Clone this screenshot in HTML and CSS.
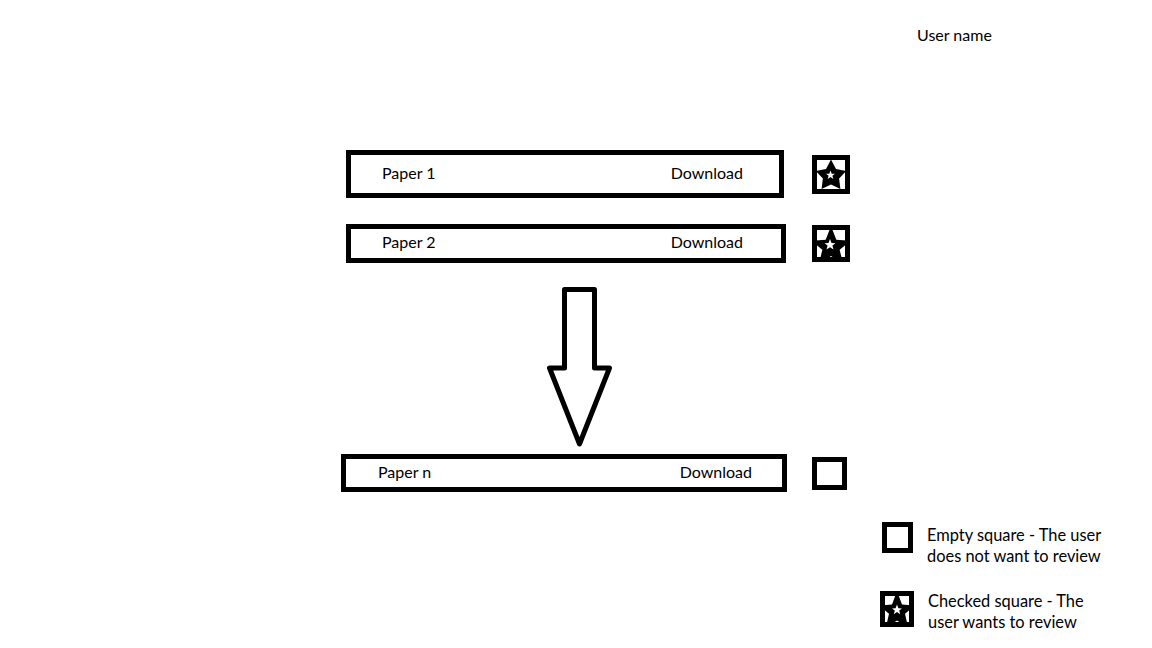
FILE: index.html
```html
<!DOCTYPE html>
<html lang="en">
<head>
    <meta charset="UTF-8">
    <meta name="viewport" content="width=device-width, initial-scale=1.0">
    <title>Papers - Review</title>
    <link rel="stylesheet" href="styles.css">
</head>
<body>
    <header class="topbar">
        <span class="user-name">User name</span>
    </header>

    <main class="papers">
        <div class="paper-row row-1">
            <div class="paper">
                <span class="paper-title">Paper 1</span>
                <a class="download" href="#">Download</a>
            </div>
            <!-- checked: user wants to review -->
            <svg class="mark mark-1" viewBox="0 0 38 39">
                <rect x="0" y="0" width="38" height="39" fill="#fff"/>
                <polygon fill="#000" points="19,4.5 24,14.1 34.2,16.1 27.1,23.6 28.4,33.9 19,29.5 9.6,33.9 10.9,23.6 3.8,16.1 14,14.1"/>
                <polygon fill="#fff" points="18.5,15.5 19.7,18.7 23,18.8 20.4,20.8 21.3,24 18.5,22.1 15.7,24 16.6,20.8 14,18.8 17.3,18.7"/>
                <rect x="2.5" y="2.5" width="33" height="34" fill="none" stroke="#000" stroke-width="5"/>
            </svg>
        </div>

        <div class="paper-row row-2">
            <div class="paper">
                <span class="paper-title">Paper 2</span>
                <a class="download" href="#">Download</a>
            </div>
            <svg class="mark mark-2" viewBox="0 0 38 37">
                <rect x="0" y="0" width="38" height="37" fill="#fff"/>
                <polygon fill="#000" points="19,1 24.3,14.7 39,15.8 27.6,24.8 31.2,39 19,31 6.8,39 10.4,24.8 -1,15.8 13.7,14.7"/>
                <polygon fill="#fff" points="18,14 19.5,18 23.5,18.2 20.4,20.6 21.5,24.5 18,22.2 14.5,24.5 15.6,20.6 12.5,18.2 16.5,18"/>
                <rect x="2.5" y="2.5" width="33" height="32" fill="none" stroke="#000" stroke-width="5"/>
            </svg>
        </div>

        <svg class="arrow" viewBox="0 0 65 160">
            <polygon points="17.5,2.5 47.5,2.5 47.5,81 62.5,81 32.5,157 2.5,81 17.5,81" fill="#fff" stroke="#000" stroke-width="5" stroke-linejoin="round"/>
        </svg>

        <div class="paper-row row-n">
            <div class="paper">
                <span class="paper-title">Paper n</span>
                <a class="download" href="#">Download</a>
            </div>
            <!-- empty: user does not want to review -->
            <span class="mark mark-empty"></span>
        </div>
    </main>

    <aside class="legend">
        <div class="legend-item item-empty">
            <span class="legend-box"></span>
            <p>Empty square - The user<br>does not want to review</p>
        </div>
        <div class="legend-item item-checked">
            <svg class="legend-star" viewBox="0 0 34 36">
                <rect x="0" y="0" width="34" height="36" fill="#fff"/>
                <polygon fill="#000" points="17,0 22,13.5 35,14.5 25,22.8 28.2,37 17,29.5 5.8,37 9,22.8 -1,14.5 12,13.5"/>
                <polygon fill="#fff" points="17,13.5 18.4,17.2 22,17.4 19.2,19.6 20.2,23.2 17,21.1 13.8,23.2 14.8,19.6 12,17.4 15.6,17.2"/>
                <rect x="2.5" y="2.5" width="29" height="31" fill="none" stroke="#000" stroke-width="5"/>
            </svg>
            <p>Checked square - The<br>user wants to review</p>
        </div>
    </aside>
</body>
</html>
```

FILE: styles.css
```css
* {
    margin: 0;
    padding: 0;
    box-sizing: border-box;
}

body {
    font-family: Lato, "Open Sans", sans-serif;
    font-size: 16px;
    color: #000;
    background: #fff;
    width: 1152px;
    min-height: 648px;
}

.topbar {
    height: 150px;
    padding: 25px 0 0 917px;
    line-height: 20px;
}

.papers {
    padding-left: 341px;
}

.paper-row {
    display: flex;
    align-items: center;
}

.paper {
    display: flex;
    justify-content: space-between;
    align-items: center;
    border: 5px solid #000;
    padding: 0 36px 4px 31px;
    background: #fff;
}

.download {
    color: #000;
    text-decoration: none;
}

/* each row was drawn by hand, sizes differ a little */
.row-1 {
    margin-left: 5px;
}

.row-1 .paper {
    width: 438px;
    height: 48px;
}

.row-1 .mark {
    margin-left: 28px;
}

.row-2 {
    margin-top: 26px;
    margin-left: 5px;
}

.row-2 .paper {
    width: 440px;
    height: 39px;
    padding-right: 38px;
}

.row-2 .mark {
    margin-left: 26px;
}

.row-n .paper {
    width: 446px;
    height: 38px;
    padding: 0 30px 4px 32px;
}

.row-n .mark {
    margin-left: 25px;
}

.mark {
    display: block;
    flex-shrink: 0;
}

.mark-1 {
    width: 38px;
    height: 39px;
}

.mark-2 {
    width: 38px;
    height: 37px;
}

.mark-empty {
    width: 35px;
    height: 33px;
    border: 5px solid #000;
}

.arrow {
    display: block;
    width: 65px;
    height: 160px;
    margin: 24px 0 7px 206px;
}

.legend {
    margin: 30px 0 0 882px;
}

.legend-item {
    display: flex;
    align-items: flex-start;
}

.legend-item p {
    font-size: 16.4px;
    line-height: 21px;
    margin-left: 14px;
    white-space: nowrap;
}

.item-empty p {
    margin-top: 2px;
}

.legend-box {
    display: block;
    width: 31px;
    height: 31px;
    border: 5px solid #000;
    flex-shrink: 0;
}

.item-checked {
    margin-top: 23px;
    margin-left: -2px;
}

.item-checked p {
    margin-top: 1px;
}

.legend-star {
    display: block;
    width: 34px;
    height: 36px;
    margin-top: 2px;
    flex-shrink: 0;
}
```
